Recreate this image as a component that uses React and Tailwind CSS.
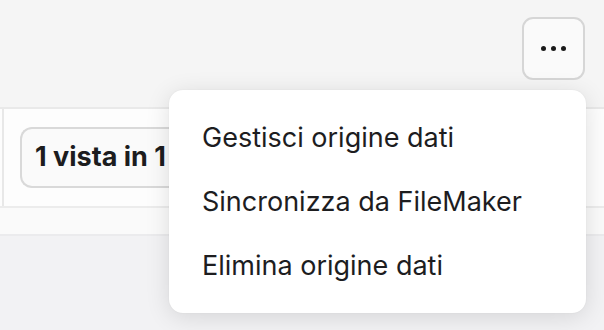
export default function App() {
  return (
    <div
      className="relative w-[604px] h-[330px] overflow-hidden bg-[#f2f2f4]"
      style={{ fontFamily: "Inter, 'Noto Sans', sans-serif" }}
    >
      <div className="h-[107px] bg-[#f5f5f5] flex justify-end items-start pt-[17px] pr-[19px]">
        <div className="w-[63px] h-[63px] rounded-[11px] border-2 border-[#d6d6d6] bg-[#fafafa] flex items-center justify-center gap-[5px]">
          <span className="w-[5px] h-[5px] rounded-full bg-[#1a1a1a]" />
          <span className="w-[5px] h-[5px] rounded-full bg-[#1a1a1a]" />
          <span className="w-[5px] h-[5px] rounded-full bg-[#1a1a1a]" />
        </div>
      </div>
      <div className="border-t-2 border-[#e9e9e9] h-[99px] bg-[#fdfdfd] pl-[2px]">
        <div className="h-full border-l-2 border-[#e8e8e8] pl-[16px] flex items-center">
          <div className="h-[61px] w-[165px] overflow-hidden rounded-l-[12px] border-2 border-r-0 border-[#d9d9d9] bg-[#fafafa] flex items-center pl-[13px]">
            <span className="text-[27px] font-bold text-[#1c1c1e] whitespace-nowrap">1 vista in 1</span>
          </div>
        </div>
      </div>
      <div className="border-t-2 border-[#ececec] h-[30px] bg-[#fafafa] border-b-2 border-b-[#ebebed]" />
      <div
        className="absolute left-[169px] top-[90px] w-[417px] h-[223px] rounded-[14px] bg-white py-[16px]"
        style={{ boxShadow: "0 4px 24px rgba(0,0,0,0.12), 0 0 2px rgba(0,0,0,0.06)" }}
      >
        {["Gestisci origine dati", "Sincronizza da FileMaker", "Elimina origine dati"].map((t) => (
          <div key={t} className="h-[64px] flex items-center pl-[33px] text-[27px] text-[#1d1d1f]">
            {t}
          </div>
        ))}
      </div>
    </div>
  );
}
